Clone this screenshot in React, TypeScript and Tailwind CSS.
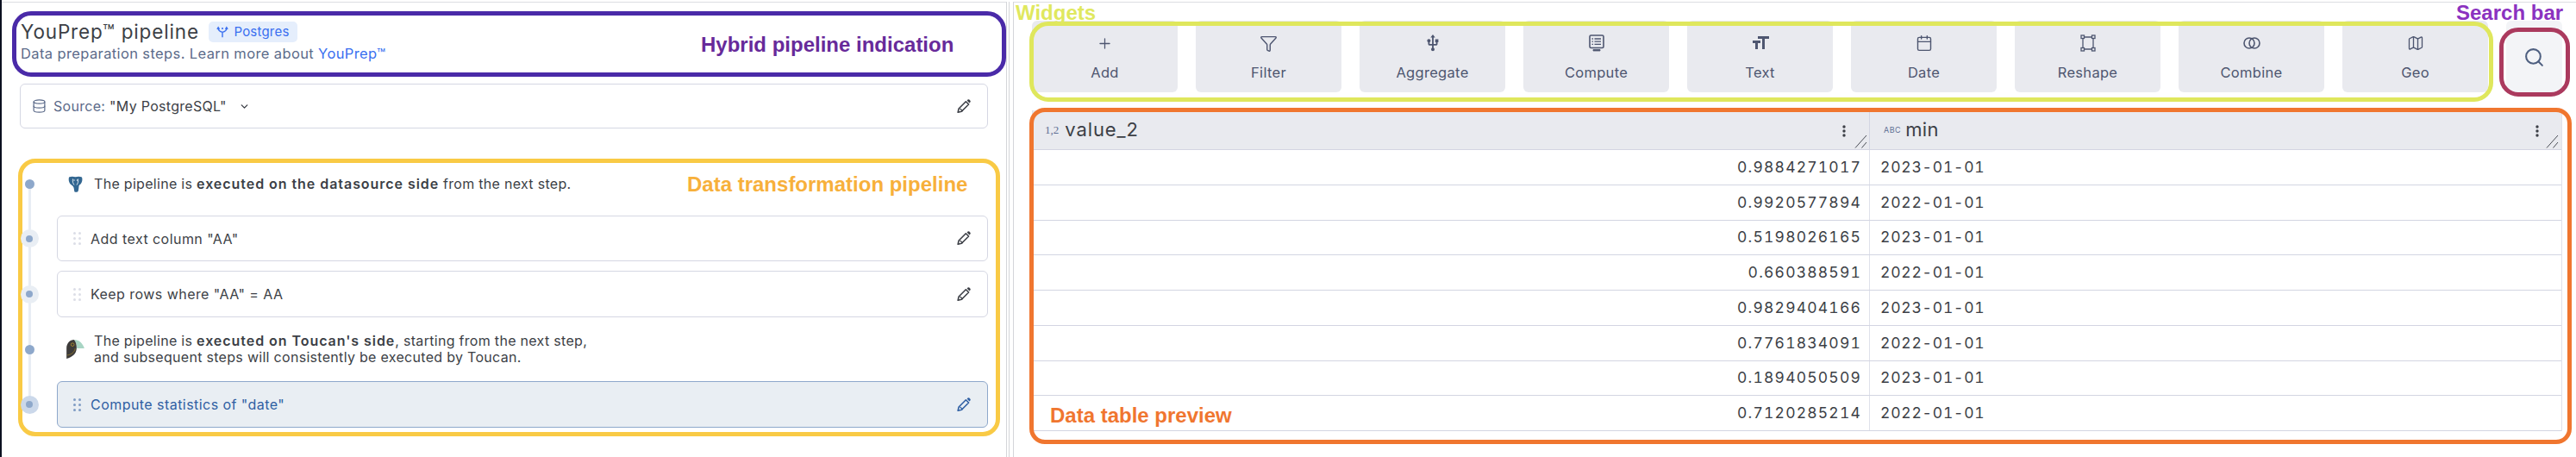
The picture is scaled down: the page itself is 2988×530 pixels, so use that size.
import { Calendar, ChevronDown, Database, Funnel, Map as MapIcon, Plus, Search } from "lucide-react";
import { MdFormatSize, MdUsb } from "react-icons/md";

const rows = [
  ["0.9884271017", "2023-01-01"],
  ["0.9920577894", "2022-01-01"],
  ["0.5198026165", "2023-01-01"],
  ["0.660388591", "2022-01-01"],
  ["0.9829404166", "2023-01-01"],
  ["0.7761834091", "2022-01-01"],
  ["0.1894050509", "2023-01-01"],
  ["0.7120285214", "2022-01-01"],
];

function PencilIcon({ className }: { className: string }) {
  return (
    <svg viewBox="0 0 24 24" className={className}>
      <path d="M4 20.5l1.2-5.3L15.6 4.8l4.1 4.1L9.3 19.3z" fill="none" stroke="currentColor" strokeWidth="2" strokeLinejoin="round" />
      <path d="M7 15l4 4" stroke="currentColor" strokeWidth="1.5" />
      <path d="M17.2 3.2l1.2-1.2a1.6 1.6 0 0 1 2.2 0l1.4 1.4a1.6 1.6 0 0 1 0 2.2l-1.2 1.2z" fill="currentColor" />
    </svg>
  );
}

function GripDots({ className }: { className: string }) {
  return (
    <svg viewBox="0 0 9 15" className={`w-[9px] h-[15px] ${className}`} fill="currentColor">
      <circle cx="1.5" cy="1.5" r="1.5" />
      <circle cx="7.5" cy="1.5" r="1.5" />
      <circle cx="1.5" cy="7.5" r="1.5" />
      <circle cx="7.5" cy="7.5" r="1.5" />
      <circle cx="1.5" cy="13.5" r="1.5" />
      <circle cx="7.5" cy="13.5" r="1.5" />
    </svg>
  );
}

function ForkIcon() {
  return (
    <svg viewBox="0 0 16 16" className="w-[14px] h-[16px]" fill="none" stroke="currentColor" strokeWidth="1.6">
      <path d="M8 15V8.5M2.5 3.5c0 3 2 4 5.5 5 3.5-1 5.5-2 5.5-5" />
      <path d="M1 4.5l1.5-2.5 1.5 2.5M12 4.5l1.5-2.5 1.5 2.5" />
      <circle cx="8" cy="3.5" r="1.2" fill="currentColor" stroke="none" />
    </svg>
  );
}

function ElephantIcon() {
  return (
    <svg viewBox="0 0 17 19" className="w-[17px] h-[19px] mr-[13px]">
      <path d="M1 1.5C3 .5 6 .5 8.5 1.2C11 .5 14 .5 16 1.5C17 4 16.3 7.5 14.5 9.5C13.5 10.5 12.8 10.5 12.5 12C12.3 14 12.3 16 11.5 18C10.500 19 8.5 19 7.5 18.5C6.8 16.5 7 14 6 12.5C5 10.8 3.5 10.5 2.2 9C.8 7 .3 4 1 1.5z" fill="#336791" />
      <path d="M5.5 3.5C5 6 5.5 8.5 7 10.5M11.5 3.5C12 6 11.5 8.5 10 10.5" fill="none" stroke="#ffffff" strokeWidth="0.8" />
      <circle cx="7" cy="5" r="0.7" fill="#ffffff" />
      <circle cx="10.5" cy="5" r="0.7" fill="#ffffff" />
    </svg>
  );
}

function ToucanLogo() {
  return (
    <svg viewBox="0 0 62 66" className="w-[21px] h-[22px]">
      <path d="M26 0C44 0 56 12 62 30L36 30C36 18 32 6 26 0z" fill="#a8d5c4" />
      <path d="M0 66V30C0 12 12 0 26 0C32 6 36 18 35 30C34 50 20 60 0 66z" fill="#3d3b3a" />
      <circle cx="21" cy="17" r="5.5" fill="none" stroke="#c9a227" strokeWidth="2" />
      <path d="M2 54C16 52 28 44 30 30" fill="none" stroke="#c9a227" strokeWidth="1.5" />
    </svg>
  );
}

function ComputeIcon() {
  return (
    <svg viewBox="0 0 18 20" className="w-[18px] h-[20px]" fill="none" stroke="currentColor">
      <rect x="1" y="1" width="16" height="14.5" rx="1.5" strokeWidth="1.6" />
      <path d="M6.5 5H14M6.5 8.2H14M6.5 11.4H14M3.5 5H5M3.5 8.2H5M3.5 11.4H5" strokeWidth="1.3" />
      <path d="M5 17.5H13V19H5z" fill="currentColor" strokeWidth="0.8" />
    </svg>
  );
}

function ReshapeIcon() {
  return (
    <svg viewBox="0 0 18 20" className="w-[18px] h-[20px]" fill="none" stroke="currentColor" strokeWidth="1.3">
      <path d="M3 3H15V17H3z" />
      <rect x="1" y="1" width="3.5" height="3.5" fill="#e9eaef" />
      <rect x="13.5" y="1" width="3.5" height="3.5" fill="#e9eaef" />
      <rect x="1" y="15.5" width="3.5" height="3.5" fill="#e9eaef" />
      <rect x="13.5" y="15.5" width="3.5" height="3.5" fill="#e9eaef" />
    </svg>
  );
}

function CombineIcon() {
  return (
    <svg viewBox="0 0 20 16" className="w-[20px] h-[16px]" fill="none" stroke="currentColor" strokeWidth="1.6">
      <circle cx="7" cy="8" r="6" />
      <circle cx="13" cy="8" r="6" />
    </svg>
  );
}

function Kebab() {
  return (
    <svg viewBox="0 0 4 14" className="w-[4px] h-[14px]" fill="#3c3f46">
      <circle cx="2" cy="2" r="1.7" />
      <circle cx="2" cy="7" r="1.7" />
      <circle cx="2" cy="12" r="1.7" />
    </svg>
  );
}

function ResizeMark() {
  return (
    <svg viewBox="0 0 15 16" className="w-[15px] h-[16px]" fill="none" stroke="#4a4d55" strokeWidth="1">
      <path d="M1 15.5L14 1M8.5 15.5L14 9" />
    </svg>
  );
}

const widgets = [
  { label: "Add", icon: <Plus className="w-[19px] h-[19px]" strokeWidth={1.6} /> },
  { label: "Filter", icon: <Funnel className="w-[21px] h-[21px]" strokeWidth={1.6} /> },
  { label: "Aggregate", icon: <MdUsb className="w-[22px] h-[22px]" /> },
  { label: "Compute", icon: <ComputeIcon /> },
  { label: "Text", icon: <MdFormatSize className="w-[24px] h-[24px]" /> },
  { label: "Date", icon: <Calendar className="w-[20px] h-[20px]" strokeWidth={1.7} /> },
  { label: "Reshape", icon: <ReshapeIcon /> },
  { label: "Combine", icon: <CombineIcon /> },
  { label: "Geo", icon: <MapIcon className="w-[20px] h-[20px]" strokeWidth={1.6} /> },
];

function Dot({ halo }: { halo?: "light" | "dark" }) {
  if (!halo) {
    return (
      <div className="relative z-10 w-[22px] flex justify-center shrink-0">
        <div className="w-[11px] h-[11px] rounded-full bg-[#8ea8cb]" />
      </div>
    );
  }
  return (
    <div className={`relative z-10 w-[21px] h-[21px] mx-[0.5px] rounded-full flex items-center justify-center shrink-0 ${halo === "dark" ? "bg-[#cbd8ea]" : "bg-[#e9eef4]"}`}>
      <div className="w-[8px] h-[8px] rounded-full bg-[#8ea8cb]" />
    </div>
  );
}

function StepCard({ label, height, active }: { label: string; height: string; active?: boolean }) {
  return (
    <div className={`flex-1 ml-[21px] flex items-center pl-[18px] pr-[18px] rounded-[6px] border ${height} ${active ? "bg-[#e9eef3] border-[#8ea8cb] text-[#2f5fa3]" : "bg-white border-[#d5d7e3] text-[#3c3f46]"}`}>
      <GripDots className={active ? "text-[#7f9cc4]" : "text-[#dcdee7]"} />
      <span className="ml-[11px] text-[16px] tracking-[0.45px]">{label}</span>
      <PencilIcon className={`ml-auto w-[19px] h-[19px] ${active ? "text-[#2f5fa3]" : "text-[#3c3f46]"}`} />
    </div>
  );
}

export default function App() {
  return (
    <div className="relative w-[2988px] h-[530px] overflow-hidden bg-white flex font-['Inter',sans-serif]">
      <div className="w-[2px] bg-[#0b1020] shrink-0" />

      {/* left panel */}
      <div className="w-[1165px] shrink-0 border-t border-[#dcdde2] mt-[2px] pl-[21px] pr-[21px]">
        <div className="flex items-center mt-[22px] h-[24px] pl-px">
          <span className="w-[207px] text-[22.5px] text-[#3c3f46] tracking-[0.85px] whitespace-nowrap">YouPrep™ pipeline</span>
          <span className="ml-[11px] h-[24px] w-[103px] rounded-[5px] bg-[#e5eefc] text-[#3a6ff0] flex items-center justify-center gap-[6px] text-[15px] tracking-[0.2px]">
            <ForkIcon />
            Postgres
          </span>
        </div>
        <div className="mt-[3px] h-[20px] pl-px text-[16.5px] leading-[20px] text-[#5c6b8a] tracking-[0.38px]">
          Data preparation steps. Learn more about <span className="text-[#3a6ff0]">YouPrep™</span>
        </div>

        <div className="mt-[25px] h-[52px] rounded-[6px] border border-[#d5d7e3] flex items-center pl-[13px] pr-[18px]">
          <Database className="w-[17px] h-[18px] text-[#5c6b8a]" strokeWidth={1.7} />
          <span className="ml-[8px] text-[16px] text-[#5c6b8a] tracking-[0.3px]">
            Source: <span className="text-[#3c3f46]">"My PostgreSQL"</span>
          </span>
          <ChevronDown className="ml-[14px] w-[13px] h-[13px] text-[#3c3f46]" strokeWidth={2.5} />
          <PencilIcon className="ml-auto w-[19px] h-[19px] text-[#3c3f46]" />
        </div>

        {/* steps with the timeline behind them */}
        <div className="relative mt-[51px]">
          <div className="absolute left-[10px] top-[13px] w-[3px] h-[256px] bg-[#e8edf4]" />

          <div className="flex items-center h-[26px]">
            <Dot />
            <div className="ml-[34px] flex items-center text-[16px] text-[#3c3f46] tracking-[0.3px]">
              <ElephantIcon />
              <span>
                The pipeline is <b className="font-semibold tracking-[0.95px]">executed on the datasource side</b> from the next step.
              </span>
            </div>
          </div>

          <div className="flex items-center mt-[24px]">
            <Dot halo="light" />
            <StepCard label={'Add text column "AA"'} height="h-[53px]" />
          </div>

          <div className="flex items-center mt-[11px]">
            <Dot halo="light" />
            <StepCard label={'Keep rows where "AA" = AA'} height="h-[54px]" />
          </div>

          <div className="flex items-center h-[52px] mt-[11px]">
            <Dot />
            <div className="ml-[32px] flex items-center text-[16px] leading-[19px] text-[#3c3f46] tracking-[0.3px]">
              <ToucanLogo />
              <div className="ml-[11px]">
                <div>
                  The pipeline is <b className="font-semibold tracking-[0.95px]">executed on Toucan's side</b>, starting from the next step,
                </div>
                <div>and subsequent steps will consistently be executed by Toucan.</div>
              </div>
            </div>
          </div>

          <div className="flex items-center mt-[11px]">
            <Dot halo="dark" />
            <StepCard label={'Compute statistics of "date"'} height="h-[54px]" active />
          </div>
        </div>
      </div>

      {/* splitter */}
      <div className="w-[4px] shrink-0 border-x border-[#d4d5d9] mt-[2px]" />
      <div className="w-[5px] shrink-0 border-r border-[#d4d5d9] mt-[2px]" />

      {/* right panel */}
      <div className="flex-1 border-t border-[#dcdde2] mt-[2px] pl-[21px]">
        <div className="flex gap-[21px] mt-[21px]">
          {widgets.map((w) => (
            <div key={w.label} className="w-[169px] h-[83px] rounded-[6px] bg-[#e9eaef] text-[#4e5670] flex flex-col items-center">
              <div className="h-[24px] mt-[14px] flex items-center justify-center">{w.icon}</div>
              <span className="mt-[12px] text-[16.5px] leading-[20px] tracking-[0.3px]">{w.label}</span>
            </div>
          ))}
          <div className="w-[65px] h-[83px] rounded-[6px] bg-[#f3f4f7] flex justify-center pt-[30px]">
            <Search className="w-[25px] h-[25px] text-[#4e5f80]" strokeWidth={2} />
          </div>
        </div>

        <div className="mt-[21px] w-[1775px] border-l border-r border-[#dfe1ea]">
          <div className="grid grid-cols-[971px_803px] h-[46px] bg-[#e9eaef] border-b border-[#d3d5e2]">
            <div className="relative flex items-center pl-[14px] border-r border-[#d3d5e2]">
              <span className="text-[13px] font-['Liberation_Serif',serif] text-[#5f6f94]">1,2</span>
              <span className="ml-[7px] text-[22px] text-[#3c3f46] tracking-[0.9px]">value_2</span>
              <span className="absolute right-[27px] top-[17px]"><Kebab /></span>
              <span className="absolute right-[2px] bottom-[1px]"><ResizeMark /></span>
            </div>
            <div className="relative flex items-center pl-[16px]">
              <span className="text-[9px] tracking-[0.5px] text-[#5f6f94]">ABC</span>
              <span className="ml-[5px] text-[22px] text-[#3c3f46] tracking-[0.4px]">min</span>
              <span className="absolute right-[27px] top-[17px]"><Kebab /></span>
              <span className="absolute right-[4px] bottom-[1px]"><ResizeMark /></span>
            </div>
          </div>
          {rows.map(([value, date], i) => (
            <div key={i} className="grid grid-cols-[971px_803px] h-[40.75px] border-b border-[#d3d5e2] text-[17.5px] tabular-nums text-[#3c3f46]">
              <div className="flex items-center justify-end pr-[9px] tracking-[1.2px] border-r border-[#dfe1ea]">{value}</div>
              <div className="flex items-center pl-[12px] tracking-[0.8px]">{date}</div>
            </div>
          ))}
        </div>
      </div>

      {/* annotation layer drawn over the app */}
      <div className="absolute left-[14px] top-[13px] w-[1153px] h-[76px] rounded-[22px] border-[5px] border-[#4a2aa8] pointer-events-none" />
      <div className="absolute left-[21px] top-[184px] w-[1139px] h-[322px] rounded-[20px] border-[5px] border-[#f9ca45] pointer-events-none" />
      <div className="absolute left-[1194px] top-[25px] w-[1698px] h-[93px] rounded-[22px] border-[5px] border-[#dfe75c] pointer-events-none" />
      <div className="absolute left-[2899px] top-[32px] w-[82px] h-[80px] rounded-[22px] border-[5px] border-[#ab3a5e] pointer-events-none" />
      <div className="absolute left-[1194px] top-[125px] w-[1789px] h-[390px] rounded-[18px] border-[5px] border-[#f0762f] pointer-events-none" />

      <span className="absolute left-[813px] top-[38px] text-[24px] leading-[28px] font-bold font-['Liberation_Sans',sans-serif] text-[#672a9a]">Hybrid pipeline indication</span>
      <span className="absolute left-[797px] top-[200px] text-[24px] leading-[28px] font-bold font-['Liberation_Sans',sans-serif] text-[#f7b03b]">Data transformation pipeline</span>
      <span className="absolute left-[1178px] top-[1px] text-[24px] leading-[28px] font-bold font-['Liberation_Sans',sans-serif] text-[#e0e85e]">Widgets</span>
      <span className="absolute left-[2849px] top-[1px] text-[24px] leading-[28px] font-bold font-['Liberation_Sans',sans-serif] text-[#8b32c0]">Search bar</span>
      <span className="absolute left-[1218px] top-[468px] text-[24px] leading-[28px] font-bold font-['Liberation_Sans',sans-serif] text-[#f0762f]">Data table preview</span>
    </div>
  );
}
